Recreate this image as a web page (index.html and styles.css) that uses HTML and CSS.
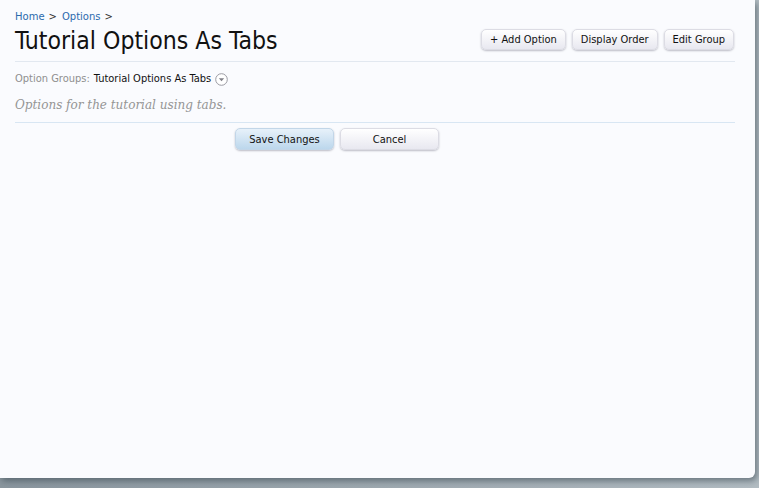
FILE: index.html
```html
<!DOCTYPE html>
<html>
<head>
<meta charset="utf-8">
<link rel="stylesheet" href="styles.css">
</head>
<body>
<div class="frame">
  <div class="panel">
    <nav class="crumbs">
      <a class="crumb">Home</a><span class="sep">&gt;</span>
      <a class="crumb">Options</a><span class="sep">&gt;</span>
    </nav>
    <div class="titlebar">
      <h1 class="title">Tutorial Options As Tabs</h1>
      <div class="topctrls">
        <a class="btn">+ Add Option</a>
        <a class="btn">Display Order</a>
        <a class="btn">Edit Group</a>
      </div>
    </div>
    <div class="groups">
      <span class="label">Option Groups:</span>
      <span class="gname">Tutorial Options As Tabs</span>
      <span class="ddicon"><svg width="13" height="13" viewBox="0 0 13 13"><circle cx="6.5" cy="6.5" r="5.8" fill="#fff" stroke="#9a9aa2" stroke-width="1"/><path d="M3.8 5.2 L9.2 5.2 L6.5 8.2 Z" fill="#808088"/></svg></span>
    </div>
    <p class="desc">Options for the tutorial using tabs.</p>
    <div class="submit">
      <button class="btn primary">Save Changes</button>
      <button class="btn">Cancel</button>
    </div>
  </div>
</div>
</body>
</html>
```
FILE: styles.css
```css
html, body {
  margin: 0;
  padding: 0;
}
body {
  width: 759px;
  height: 488px;
  overflow: hidden;
  background: linear-gradient(to right, #8a969e, #b2bcc2);
  font-family: "DejaVu Sans", Verdana, sans-serif;
}
.frame {
  width: 755px;
  height: 478px;
}
.panel {
  box-sizing: border-box;
  width: 755px;
  height: 478px;
  background: #fafbfe;
  border-bottom-right-radius: 6px;
  padding: 10px 20px 0 15px;
  box-shadow: 2px 3px 6px rgba(60, 75, 85, 0.6);
}
.crumbs {
  font-size: 10px;
  line-height: 14px;
  display: flex;
  align-items: center;
}
.crumb {
  color: #2b6aad;
}
.sep {
  color: #333;
  margin: 0 5px 0 4px;
}
.titlebar {
  display: flex;
  justify-content: space-between;
  align-items: flex-start;
  border-bottom: 1px solid #e2e8f0;
  padding-bottom: 5px;
  margin-top: 2px;
}
.title {
  margin: 0;
  font-family: "DejaVu Sans Condensed", "DejaVu Sans", sans-serif;
  font-weight: normal;
  font-size: 24.6px;
  line-height: 30px;
  color: #111;
}
.topctrls {
  display: flex;
  gap: 6px;
  margin-top: 3px;
  margin-right: 1px;
}
.btn {
  box-sizing: border-box;
  display: inline-flex;
  align-items: center;
  justify-content: center;
  height: 21px;
  padding: 0 8px;
  font-family: "DejaVu Sans Condensed", "DejaVu Sans", sans-serif;
  font-size: 11px;
  color: #111;
  background: linear-gradient(to bottom, #ffffff, #e8e8f0);
  border: 1px solid #dcdce4;
  border-radius: 5px;
  box-shadow: 0 1px 2px rgba(0, 0, 30, 0.25);
}
.groups {
  margin-top: 9px;
  display: flex;
  align-items: center;
  font-family: "DejaVu Sans Condensed", "DejaVu Sans", sans-serif;
  font-size: 11px;
  line-height: 16px;
}
.label {
  color: #8f8f8f;
  margin-right: 4px;
}
.gname {
  color: #111;
}
.ddicon {
  display: inline-flex;
  margin-left: 4px;
}
.desc {
  margin: 10px 0 0;
  font-family: "DejaVu Serif", Georgia, serif;
  font-style: italic;
  font-size: 12px;
  line-height: 16px;
  color: #959595;
  padding-bottom: 9px;
  border-bottom: 1px solid #d8e6f3;
}
.submit {
  display: flex;
  gap: 6px;
  padding-left: 220px;
  margin-top: 5px;
}
.submit .btn {
  width: 99px;
  height: 22px;
}
.btn.primary {
  background: linear-gradient(to bottom, #e7f1fa, #bcd7ec);
  border-color: #c2d6e8;
}
```
